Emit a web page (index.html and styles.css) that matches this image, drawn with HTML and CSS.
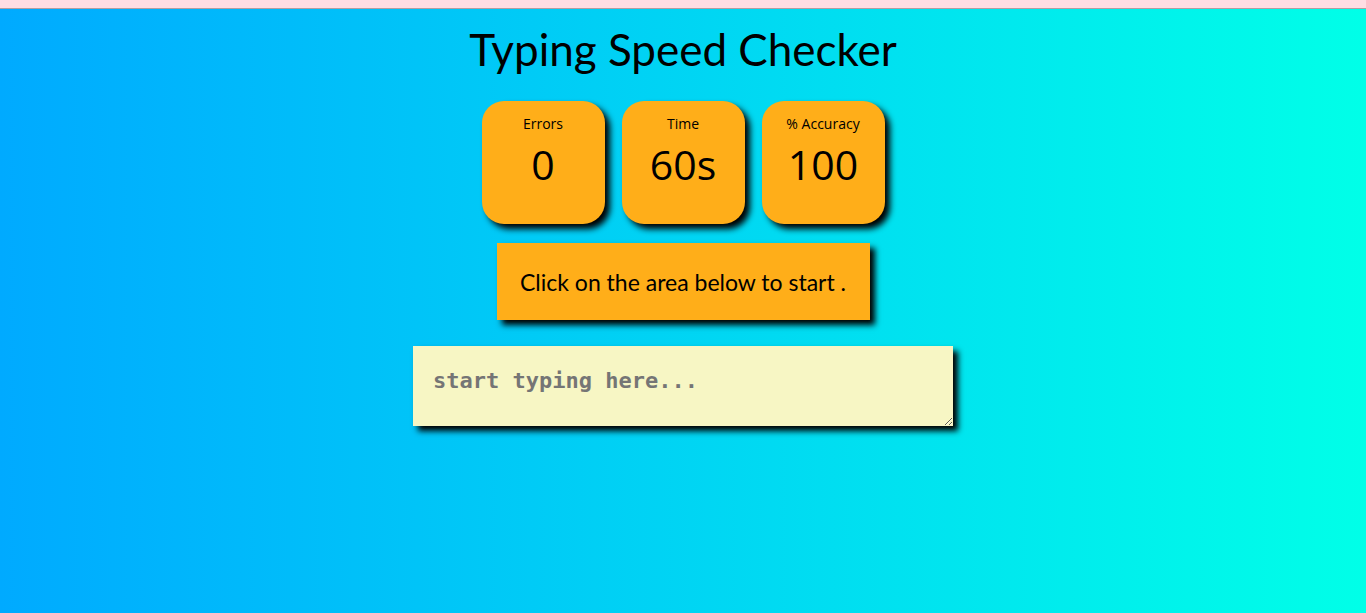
FILE: index.html
```html
<!DOCTYPE html>
<html lang="en">
<head>
<meta charset="utf-8">
<title>Typing Speed Checker</title>
<link rel="stylesheet" href="styles.css">
</head>
<body>
<div class="topbar"></div>
<main class="page">
  <h1 class="title">Typing Speed Checker</h1>
  <div class="stats">
    <div class="stat">
      <div class="stat-label">Errors</div>
      <div class="stat-value">0</div>
    </div>
    <div class="stat">
      <div class="stat-label">Time</div>
      <div class="stat-value">60s</div>
    </div>
    <div class="stat">
      <div class="stat-label">% Accuracy</div>
      <div class="stat-value">100</div>
    </div>
  </div>
  <div class="message">Click on the area below to start .</div>
  <textarea class="input" placeholder="start typing here..."></textarea>
</main>
</body>
</html>
```
FILE: styles.css
```css
html, body {
  margin: 0;
  padding: 0;
  height: 100%;
}
body {
  display: flex;
  flex-direction: column;
  font-family: "Lato", "Open Sans", sans-serif;
}
.topbar {
  height: 8px;
  background: #ffdde3;
  border-bottom: 1px solid #b39da1;
  flex: none;
}
.page {
  flex: 1;
  background: linear-gradient(to right, #00aaff, #00ffe8);
  display: flex;
  flex-direction: column;
  align-items: center;
}
.title {
  margin: 12px 0 0;
  font-weight: 400;
  font-size: 44px;
  line-height: 56px;
  color: #000;
}
.stats {
  display: flex;
  gap: 17px;
  margin-top: 24px;
}
.stat {
  width: 123px;
  height: 123px;
  box-sizing: border-box;
  background: #ffae19;
  border-radius: 22px;
  box-shadow: 5px 5px 6px #000;
  display: flex;
  flex-direction: column;
  align-items: center;
  padding-top: 14px;
}
.stat-label {
  font-family: "Open Sans", "Noto Sans", sans-serif;
  font-size: 14px;
  line-height: 18px;
  color: #000;
}
.stat-value {
  font-family: "Open Sans", "Noto Sans", sans-serif;
  font-size: 41px;
  line-height: 50px;
  margin-top: 6px;
  color: #000;
}
.message {
  margin-top: 19px;
  width: 373px;
  height: 77px;
  box-sizing: border-box;
  background: #ffae19;
  box-shadow: 5px 5px 6px #000;
  display: flex;
  align-items: center;
  justify-content: center;
  font-size: 23px;
  color: #000;
}
.input {
  margin-top: 26px;
  width: 540px;
  height: 80px;
  box-sizing: border-box;
  border: none;
  background: #f7f6c4;
  box-shadow: 5px 5px 6px #000;
  padding: 21px 20px;
  font-family: "DejaVu Sans Mono", "Liberation Mono", monospace;
  font-weight: 700;
  font-size: 22px;
  line-height: 28px;
  color: #333;
  resize: vertical;
  outline: none;
}
.input::placeholder {
  color: #757575;
}
```
